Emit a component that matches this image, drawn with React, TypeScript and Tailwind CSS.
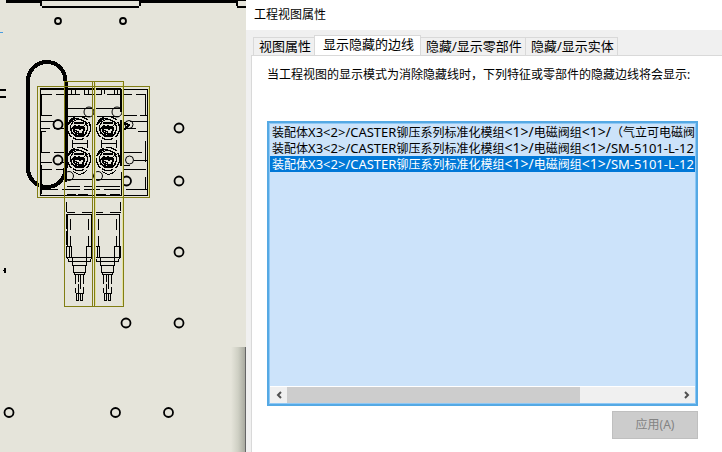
import { useState } from "react";

const holes: [number, number, number][] = [
  [58, 21, 3],
  [123, 21, 3],
  [179, 128, 4.5],
  [179, 181, 4.5],
  [179, 252, 4.5],
  [126, 323, 4.5],
  [179, 323, 4.5],
  [9, 412.5, 4.5],
  [115.5, 412.5, 4.5],
  [168.5, 412.5, 4.5],
  [58, 124.5, 4.5],
  [58, 160, 4.5],
  [126.5, 181, 4.5],
];

function ValveHead({ x, y }: { x: number; y: number }) {
  return (
    <g transform={`translate(${x} ${y})`} strokeWidth="1.3">
      <circle r="11.5" strokeDasharray="11 2" />
      <circle r="8.5" strokeDasharray="14 1" />
      <path d="M-10-4Q-6-11 0-9T9-4M-9 3L-4-3L1 2L7-4M-8 6Q-3 0 0 5T8 5M-5-5H5M-6 0H6M-3 4V8H4V3" />
      <ellipse rx="5" ry="4" cy="2" />
    </g>
  );
}

function Connector({ x }: { x: number }) {
  return (
    <g transform={`translate(${x} 0)`}>
      <path d="M66.5 202V212M92.5 202V211M66.5 212.5H75M82 212.5H92.5" />
      <path d="M67.5 246V214.5H91.5V246M66.5 214V229M66.5 231V245" />
      <path d="M70.5 219V230M70.5 236V246M88.5 219V230M88.5 236V246" />
      <path d="M66.5 246.5H71.5V257.5M69.5 246V257M86.5 257V246.5H91.5V257.5M66.5 246V257.5H92.5V246" />
      <path d="M67.5 258L69 261.5H90L91.5 258M72.5 258V265.5H86.5V258M73.5 265V272.5H85.5V265M74.5 272V274.5H84.5V272" />
      <path d="M75.5 275V284M75.5 288V293M78.5 275V282M78.5 284V293M80.5 275V289M83.5 275V284M83.5 287V293M75.5 293.5H84" />
      <path d="M76.5 293V300.5H78.5V293M80.5 293V300.5H82.5V293" />
    </g>
  );
}

function Drawing() {
  return (
    <svg
      width="246"
      height="452"
      viewBox="0 0 246 452"
      role="img"
      aria-label="工程视图"
      fill="none"
      stroke="#000"
      shapeRendering="crispEdges"
    >
      <defs>
        <linearGradient id="shade">
          <stop offset="0" stopColor="#e5e4da" />
          <stop offset="0.5" stopColor="#cfd0c4" />
          <stop offset="1" stopColor="#a9aaa0" />
        </linearGradient>
      </defs>
      <path d="M6 0H246V3H6Z" fill="#000" stroke="none" />
      <path d="M41 1H140V6.5H41Z" fill="#e5e4da" stroke="none" />
      <path d="M237 1H246V6.5H237Z" fill="#e5e4da" stroke="none" />
      <path d="M41 .5H140M236 .5H246" />
      <path d="M41 1V6M140 1V6M237 1V6" strokeWidth="2" />
      <path d="M42 7H139M237 7H246" strokeWidth="2" />
      <path d="M0 32.5H3" stroke="#4a9ce0" />
      <path d="M0 90H6M0 97H6" strokeWidth="2" />
      <ellipse cx="5" cy="270.5" rx="1.5" ry="3" fill="#000" stroke="none" />
      {holes.map(([x, y, r]) => (
        <circle key={`${x}-${y}`} cx={x} cy={y} r={r} strokeWidth="1.8" shapeRendering="auto" />
      ))}
      <rect x="28" y="62" width="37.5" height="125" rx="18.75" strokeWidth="4" />
      <path d="M40 196V89H121" strokeWidth="2" />
      <path d="M121 89.5H147.5V196M41.5 94V116M41.5 132V152M41.5 165V194M145.5 94V116M145.5 141V162M145.5 177V190" />
      <path d="M42 94.5H52M56 94.5H64M68 94.5H80M84 94.5H102M107 94.5H120M122 94.5H132M136 94.5H146" />
      <path d="M71.5 89V94M75.5 89V94M84.5 89V94M88.5 89V94M101.5 89V94M104.5 89V94M114.5 89V94M117.5 89V94" />
      <path d="M41 115.5H52M41 121.5H56M41 128.5H50M54 128.5H64M41 131.5H46M122 115.5H137M140 115.5H147M130 121.5H147M124 128.5H136M138 131.5H147" />
      <path d="M41 152.5H50M54 152.5H64M41 162.5H52M60 162.5H66M41 169.5H52M56 169.5H64M122 152.5H142M134 160.5H147M122 165.5H130M122 169.5H146" />
      <path d="M41 189.5H58M62 189.5H80M84 189.5H100M104 189.5H120M126 189.5H147M67 179.5H92M95 179.5H121M67 186.5H80M84 186.5H92M96 186.5H120" />
      <path d="M40 195.5H147M67 194.5H76M78 194.5H88M96 194.5H106M110 194.5H120" />
      <path d="M66 90V182M121 90V112M121 120V166M95 120V182" strokeWidth="2" />
      <path d="M67 108.5H92M95 108.5H120M68 116.5H90M97 116.5H119M72 143.5H88M101 143.5H117M95.5 90V106M121.5 172V196" />
      <g shapeRendering="auto">
        <circle cx="89" cy="112" r="5" />
        <circle cx="117" cy="112" r="5" />
        <circle cx="69" cy="176" r="4.5" />
        <circle cx="98" cy="176" r="4.5" />
        <circle cx="129" cy="124.5" r="4" />
        <circle cx="129.5" cy="160" r="4" />
      </g>
      <path d="M123 122L129 125L124 130M122 124H128" strokeWidth="2" />
      <ValveHead x={79} y={128} />
      <ValveHead x={108} y={128} />
      <ValveHead x={79} y={159} />
      <ValveHead x={108} y={159} />
      <path d="M72 140V148M87 140V148M101 140V148M116 140V148M73 171Q80 178 87 170M102 171Q109 178 116 170" />
      <Connector x={0} />
      <Connector x={28} />
      <path d="M39.5 88V196M148.5 88V196M95.5 83V305M122.5 83V305" stroke="#e4e29c" />
      <path
        d="M37.5 86.5H149.5V197.5H37.5ZM64.5 81.5H123.5V306.5H64.5ZM92.5 81V306M94.5 81V306"
        stroke="#817d13"
      />
      <path d="M231 347H245V452H231Z" fill="url(#shade)" stroke="none" />
      <path d="M245.5 347V452" stroke="#666" />
    </svg>
  );
}

const tabs = ["视图属性", "显示隐藏的边线", "隐藏/显示零部件", "隐藏/显示实体"];

const sizes = { cjk: "text-xs", latin: "text-[13px]", index: "text-sm" };

type Part = [keyof typeof sizes, string];

const assembly: Part[] = [
  ["cjk", "装配体"],
  ["latin", "X3<2>/CASTER"],
  ["cjk", "铆压系列标准化模组"],
  ["index", "<1>/"],
  ["cjk", "电磁阀组"],
  ["index", "<1>/"],
];

const edges: Part[][] = [
  [...assembly, ["cjk", "（气立可电磁阀）"]],
  [...assembly, ["latin", "SM-5101-L-12"]],
  [...assembly, ["latin", "SM-5101-L-12"]],
];

function Chevron({ d }: { d: string }) {
  return (
    <svg width="8" height="8" viewBox="0 0 8 8" fill="none" stroke="#505050" strokeWidth="2">
      <path d={d} />
    </svg>
  );
}

export default function App() {
  const [tab, setTab] = useState(1);
  const [selected, setSelected] = useState(2);

  return (
    <div className="flex min-h-screen bg-[#f0f0f0] font-['Noto_Sans','Noto_Sans_CJK_SC',sans-serif] text-xs text-black">
      <div className="shrink-0 bg-[#e5e4da]">
        <Drawing />
      </div>
      <section className="flex min-w-0 flex-1 flex-col" aria-labelledby="title">
        <h1 id="title" className="h-[30px] bg-white pl-2 leading-[30px]">
          工程视图属性
        </h1>
        <div className="-mb-px flex items-end pt-[5px] pl-[7px] text-[13px]" role="tablist">
          {tabs.map((name, i) => (
            <button
              key={name}
              role="tab"
              aria-selected={i === tab}
              onClick={() => setTab(i)}
              className={
                i === tab
                  ? "-ml-px h-[21px] border border-b-0 border-[#d9d9d9] bg-white pr-[6px] pb-1 pl-2 leading-4 whitespace-nowrap"
                  : "-ml-px h-[19px] border border-[#d9d9d9] bg-[#f0f0f0] pr-[3px] pl-[5px] leading-[17px] whitespace-nowrap first:ml-0"
              }
            >
              {name}
            </button>
          ))}
        </div>
        <div role="tabpanel" className="ml-[5px] flex flex-1 flex-col border-t border-l border-[#d9d9d9] bg-white pt-[10px] pr-6 pl-[15px]">
          <p id="caption" className="leading-[18px] whitespace-nowrap">
            当工程视图的显示模式为消除隐藏线时，下列特征或零部件的隐藏边线将会显示:
          </p>
          <div className="mt-[37px] border-2 border-[#55a9e4] bg-[#cce3fa]">
            <div className="border border-[#8fc8f5]">
              <ul role="listbox" aria-labelledby="caption" className="h-[262px] overflow-hidden">
                {edges.map((parts, i) => (
                  <li
                    key={i}
                    role="option"
                    aria-selected={i === selected}
                    onClick={() => setSelected(i)}
                    className={
                      i === selected
                        ? "flex h-4 items-baseline overflow-hidden bg-[#0078d7] pl-[2px] leading-4 whitespace-nowrap text-white"
                        : "flex h-4 items-baseline overflow-hidden pl-[2px] leading-4 whitespace-nowrap"
                    }
                  >
                    {parts.map(([kind, text], j) => (
                      <span key={j} className={`${sizes[kind]} shrink-0 leading-4`}>
                        {text}
                      </span>
                    ))}
                  </li>
                ))}
              </ul>
              <div className="flex h-[17px] border-t border-white bg-[#f0f0f0]">
                <button aria-label="向左滚动" className="flex w-[17px] items-center justify-center">
                  <Chevron d="M6 1L3 4L6 7" />
                </button>
                <div className="flex-1">
                  <div className="h-full w-3/4 bg-[#cdcdcd]" />
                </div>
                <button aria-label="向右滚动" className="flex w-[17px] items-center justify-center">
                  <Chevron d="M2 1L5 4L2 7" />
                </button>
              </div>
            </div>
          </div>
          <button
            disabled
            className="mt-[5px] h-7 w-[86px] self-end border border-[#bfbfbf] bg-[#cccccc] text-[#838383]"
          >
            应用(A)
          </button>
        </div>
      </section>
    </div>
  );
}
